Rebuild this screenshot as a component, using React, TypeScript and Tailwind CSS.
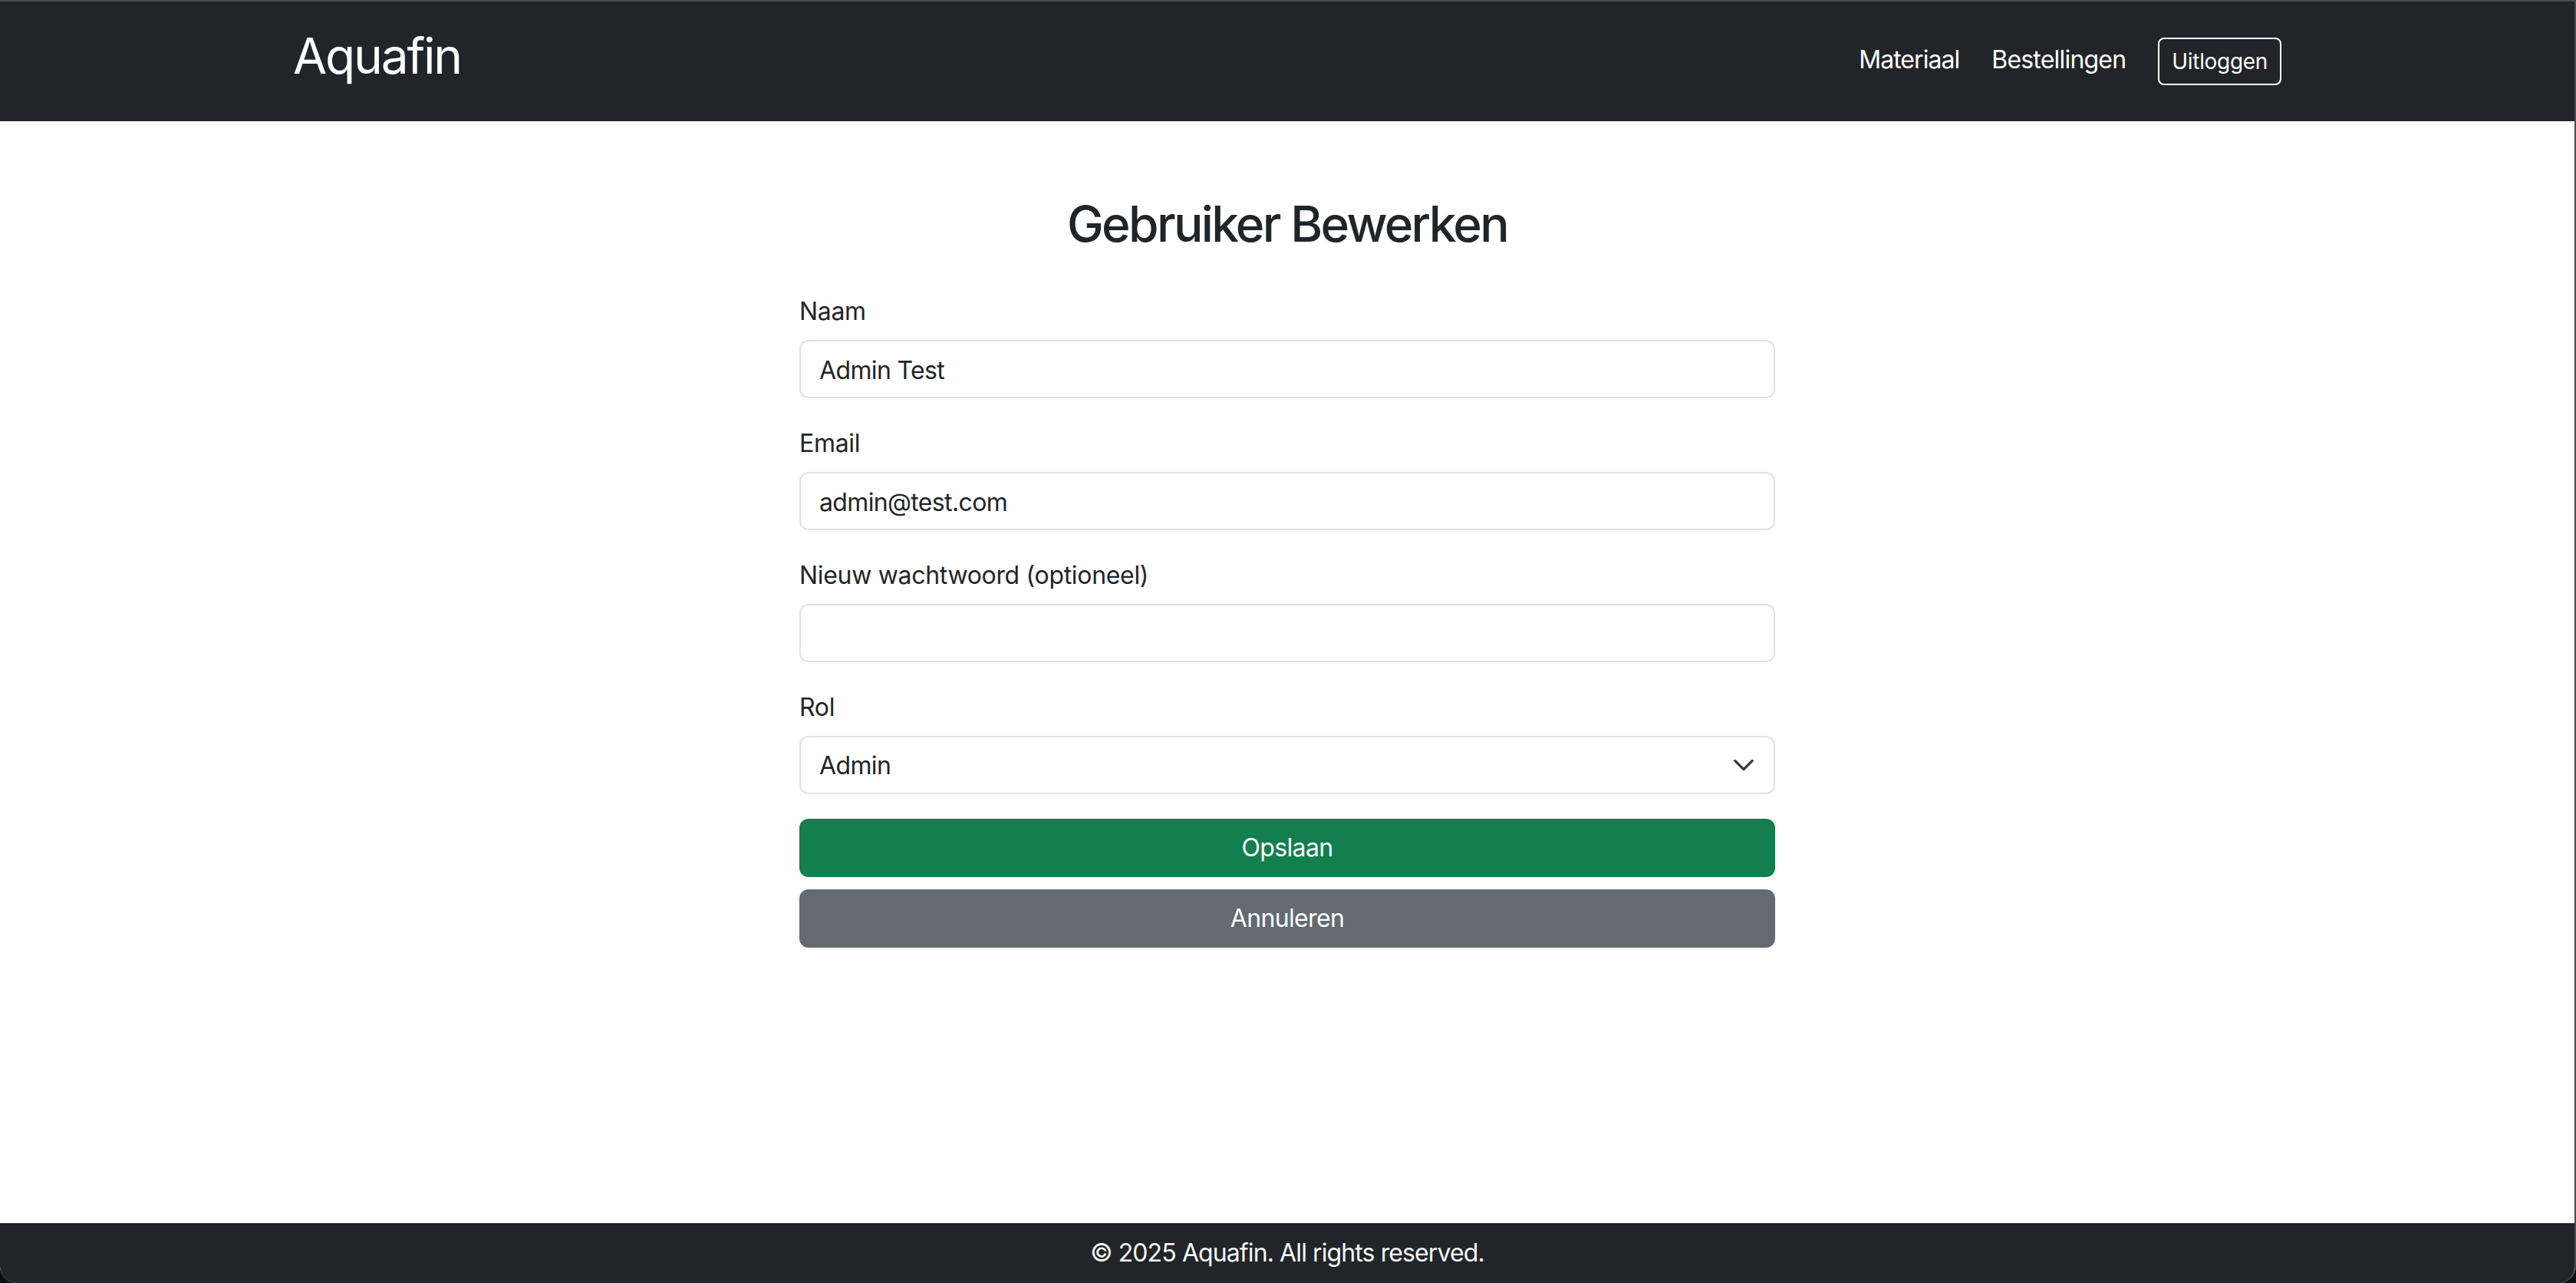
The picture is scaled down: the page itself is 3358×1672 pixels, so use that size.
import React from 'react';

const fields = [
  { label: 'Naam', value: 'Admin Test', type: 'text' },
  { label: 'Email', value: 'admin@test.com', type: 'email' },
  { label: 'Nieuw wachtwoord (optioneel)', value: '', type: 'password' },
];

export default function App() {
  return (
    <div className="h-[1672px] bg-[#0d0e0f] font-['Inter','Liberation_Sans',sans-serif] tracking-[-0.02em]">
      <div className="h-full flex flex-col bg-white border-t-2 border-r-2 border-[#4a4b4c] rounded-b-[22px] overflow-hidden">
        {/* navbar */}
        <nav className="h-[156px] shrink-0 bg-[#212529]">
          <div className="w-[2640px] h-full mx-auto px-[24px] flex items-center justify-between">
            <a href="#" className="text-[64px] leading-none text-white pb-[14px] tracking-[-0.034em]">
              Aquafin
            </a>
            <div className="flex items-center gap-[42px] text-white">
              <a href="#" className="text-[32px] leading-[48px] pb-[4px] tracking-[-0.03em]">Materiaal</a>
              <a href="#" className="text-[32px] leading-[48px] pb-[4px] tracking-[-0.025em]">Bestellingen</a>
              <button className="h-[62px] px-[16px] border-2 border-white rounded-[8px] text-[28px] leading-none">
                Uitloggen
              </button>
            </div>
          </div>
        </nav>

        {/* content */}
        <main className="flex-1">
          <div className="mt-[96px] flex flex-col items-center">
            <h2 className="text-[64px] leading-[1.2] font-medium text-[#212529] mb-[48px] tracking-[-0.042em]">
              Gebruiker Bewerken
            </h2>
            <form className="w-[1272px]" onSubmit={(e) => e.preventDefault()}>
              {fields.map((f) => (
                <div key={f.label} className="mb-[32px]">
                  <label className="block text-[32px] leading-[48px] pt-[3px] text-[#212529] mb-[13px]">
                    {f.label}
                  </label>
                  <input
                    type={f.type}
                    defaultValue={f.value}
                    className="w-full h-[76px] px-[24px] pt-[3px] border-2 border-[#dee2e6] rounded-[12px] text-[32px] text-[#212529] outline-none tracking-[-0.02em]"
                  />
                </div>
              ))}
              <div className="mb-[32px]">
                <label className="block text-[32px] leading-[48px] pt-[3px] text-[#212529] mb-[13px]">Rol</label>
                <div className="relative">
                  <select
                    defaultValue="admin"
                    className="w-full h-[76px] pl-[24px] pr-[72px] pt-[3px] border-2 border-[#dee2e6] rounded-[12px] text-[32px] text-[#212529] bg-white appearance-none outline-none tracking-[-0.02em]"
                  >
                    <option value="admin">Admin</option>
                    <option value="user">Gebruiker</option>
                  </select>
                  <svg
                    className="absolute right-[26px] top-1/2 -translate-y-1/2 w-[30px] h-[30px] pointer-events-none"
                    viewBox="0 0 16 16"
                    fill="none"
                    stroke="#343a40"
                    strokeWidth={1.75}
                    strokeLinecap="round"
                    strokeLinejoin="round"
                  >
                    <path d="m2 5 6 6 6-6" />
                  </svg>
                </div>
              </div>
              <button className="w-full h-[76px] rounded-[12px] bg-[#137e4e] text-white text-[32px] tracking-[-0.02em]">
                Opslaan
              </button>
              <button
                type="button"
                className="w-full h-[76px] mt-[16px] rounded-[12px] bg-[#636a72] text-white text-[32px] tracking-[-0.02em]"
              >
                Annuleren
              </button>
            </form>
          </div>
        </main>

        {/* footer */}
        <footer className="h-[78px] shrink-0 bg-[#212529] flex items-center justify-center">
          <p className="text-[32px] text-[#f8f9fa] tracking-[-0.028em]">© 2025 Aquafin. All rights reserved.</p>
        </footer>
      </div>
    </div>
  );
}
